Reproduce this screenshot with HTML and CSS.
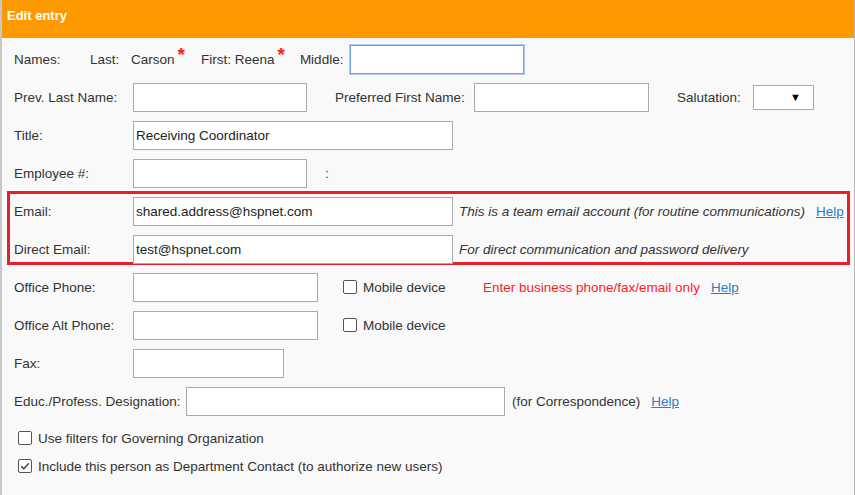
FILE: index.html
```html
<!DOCTYPE html>
<html>
<head>
<meta charset="utf-8">
<link rel="stylesheet" href="styles.css">
</head>
<body>
<div class="page">
  <div class="header">Edit entry</div>
  <div class="panel">
    <div class="row">
      <span class="names-lbl">Names:</span>
      <span class="last-lbl">Last:</span>
      <span>Carson</span><span class="req">*</span>
      <span class="first-lbl">First: Reena</span><span class="req">*</span>
      <span class="middle-lbl">Middle:</span>
      <span class="field w174 focus"></span>
    </div>
    <div class="row">
      <span class="lbl">Prev. Last Name:</span>
      <span class="field w174"></span>
      <span class="pref-lbl">Preferred First Name:</span>
      <span class="field w175"></span>
      <span class="sal-lbl">Salutation:</span>
      <span class="select"><span class="arrow">▼</span></span>
    </div>
    <div class="row">
      <span class="lbl">Title:</span>
      <span class="field w320">Receiving Coordinator</span>
    </div>
    <div class="row">
      <span class="lbl">Employee #:</span>
      <span class="field w174"></span>
      <span class="colon">:</span>
    </div>
    <div class="highlight">
      <div class="row first-in-box">
        <span class="lbl">Email:</span>
        <span class="field w320">shared.address@hspnet.com</span>
        <span class="note">This is a team email account (for routine communications)</span>
        <a class="help help-email" href="#">Help</a>
      </div>
      <div class="row">
        <span class="lbl">Direct Email:</span>
        <span class="field w320">test@hspnet.com</span>
        <span class="note">For direct communication and password delivery</span>
      </div>
    </div>
    <div class="row">
      <span class="lbl">Office Phone:</span>
      <span class="field w185"></span>
      <span class="cb mobile-cb"></span><span class="cb-text mobile-text">Mobile device</span>
      <span class="warn">Enter business phone/fax/email only</span>
      <a class="help help-warn" href="#">Help</a>
    </div>
    <div class="row">
      <span class="lbl">Office Alt Phone:</span>
      <span class="field w185"></span>
      <span class="cb mobile-cb"></span><span class="cb-text mobile-text">Mobile device</span>
    </div>
    <div class="row">
      <span class="lbl">Fax:</span>
      <span class="field w151"></span>
    </div>
    <div class="row">
      <span class="educ-lbl">Educ./Profess. Designation:</span>
      <span class="field w319"></span>
      <span class="corr">(for Correspondence)</span>
      <a class="help help-corr" href="#">Help</a>
    </div>
    <div class="check-row gap-top">
      <span class="cb"></span><span class="cb-text">Use filters for Governing Organization</span>
    </div>
    <div class="check-row">
      <span class="cb checked"><svg viewBox="0 0 12 12" width="12" height="12"><path d="M2.2 6.2 L4.8 8.8 L9.8 3.4" fill="none" stroke="#333" stroke-width="1.3"/></svg></span><span class="cb-text">Include this person as Department Contact (to authorize new users)</span>
    </div>
  </div>
</div>
</body>
</html>
```
FILE: styles.css
```css
html, body {
  margin: 0;
  padding: 0;
  background: #f9f9f9;
}
body {
  font-family: "Liberation Sans", Arial, sans-serif;
  font-size: 13.5px;
  color: #333;
}
.page {
  width: 852px;
  height: 495px;
  border-left: 2px solid #c8c8c8;
  border-right: 1px solid #b8b8b8;
  background: #f9f9f9;
  overflow: hidden;
}
.header {
  height: 38px;
  box-sizing: border-box;
  background: #ff9900;
  color: #fff;
  font-weight: bold;
  font-size: 13px;
  padding: 8px 0 0 5px;
  line-height: 16px;
}
.panel {
  padding: 2px 0 0 12px;
}
.row {
  height: 38px;
  display: flex;
  align-items: center;
  white-space: nowrap;
}
.lbl {
  width: 119px;
  flex: none;
}
.names-lbl { width: 76px; flex: none; }
.last-lbl { width: 41px; flex: none; }
.first-lbl { margin-left: 16px; }
.middle-lbl { margin-left: 15px; width: 50px; flex: none; }
.req {
  color: #ff1a1a;
  font-size: 19px;
  font-weight: bold;
  line-height: 12px;
  margin-left: 3px;
  margin-bottom: 9px;
}
.field {
  box-sizing: border-box;
  height: 29px;
  background: #fff;
  border: 1px solid #aaa;
  display: flex;
  align-items: center;
  padding-left: 2px;
  color: #222;
  flex: none;
}
.focus {
  border: 1px solid #6f9ee6;
  box-shadow: 0 0 0 1px #b4cdf2;
}
.w174 { width: 174px; }
.w175 { width: 175px; }
.w320 { width: 320px; }
.w319 { width: 319px; }
.w185 { width: 185px; }
.w151 { width: 151px; }
.pref-lbl { margin-left: 28px; width: 139px; flex: none; }
.sal-lbl { margin-left: 28px; width: 76px; flex: none; }
.select {
  box-sizing: border-box;
  width: 61px;
  height: 25px;
  background: #fff;
  border: 1px solid #aaa;
  display: flex;
  align-items: center;
  justify-content: flex-end;
  padding-right: 12px;
}
.arrow {
  font-size: 11px;
  color: #000;
}
.colon { margin-left: 18px; }
.highlight {
  margin-left: -7px;
  width: 843px;
  box-sizing: border-box;
  height: 74px;
  margin-top: -1px;
  margin-bottom: 3px;
  border: 3px solid #e8202a;
  padding-left: 4px;
}
.first-in-box { margin-top: -2px; }
.note {
  font-style: italic;
  margin-left: 6px;
}
.help {
  color: #2d7cc8;
  text-decoration: underline;
}
.help-email { margin-left: 11px; }
.cb {
  box-sizing: border-box;
  width: 14px;
  height: 14px;
  border: 1px solid #555;
  border-radius: 2px;
  background: #fff;
  flex: none;
  display: flex;
  align-items: center;
  justify-content: center;
}
.mobile-cb { margin-left: 25px; }
.cb-text { margin-left: 6px; }
.mobile-text { width: 82px; flex: none; }
.warn {
  color: #ff2020;
  margin-left: 38px;
}
.help-warn { margin-left: 11px; }
.educ-lbl { width: 172px; flex: none; }
.corr { margin-left: 7px; }
.help-corr { margin-left: 11px; }
.check-row {
  height: 28px;
  display: flex;
  align-items: center;
  padding-left: 4px;
  white-space: nowrap;
}
.gap-top { margin-top: 4px; }
```
